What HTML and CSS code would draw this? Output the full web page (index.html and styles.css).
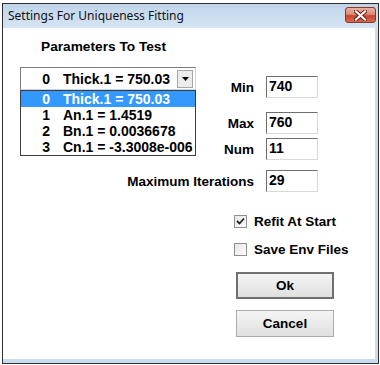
FILE: index.html
```html
<!DOCTYPE html>
<html lang="en">

<head>
    <meta charset="UTF-8">
    <title>Settings For Uniqueness Fitting</title>
    <link rel="stylesheet" href="styles.css">
</head>

<body>
    <div class="window">
        <div class="titlebar">
            <span class="title">Settings For Uniqueness Fitting</span>
            <div class="close">
                <svg width="13" height="11" viewBox="0 0 13 11">
                    <path d="M2 1.5 L11 9.5 M11 1.5 L2 9.5" stroke="#5a1a10" stroke-width="4" stroke-linecap="square" />
                    <path d="M2 1.5 L11 9.5 M11 1.5 L2 9.5" stroke="#fff" stroke-width="2.2" stroke-linecap="square" />
                </svg>
            </div>
        </div>
        <div class="client">
            <div class="upper">
                <div class="params">
                    <div class="params-title">Parameters To Test</div>
                    <div class="combo">
                        <span class="num">0</span>
                        <span class="name">Thick.1 = 750.03</span>
                        <span class="combo-btn">
                            <svg width="7" height="4" viewBox="0 0 7 4">
                                <path d="M0 0 H7 L3.5 4 Z" fill="#000" />
                            </svg>
                        </span>
                    </div>
                    <ul class="list">
                        <li class="selected"><span class="num">0</span><span class="name">Thick.1 = 750.03</span></li>
                        <li><span class="num">1</span><span class="name">An.1 = 1.4519</span></li>
                        <li><span class="num">2</span><span class="name">Bn.1 = 0.0036678</span></li>
                        <li><span class="num">3</span><span class="name">Cn.1 = -3.3008e-006</span></li>
                    </ul>
                </div>
                <div class="fields">
                    <div class="field field-min"><label>Min</label><div class="input">740</div></div>
                    <div class="field field-max"><label>Max</label><div class="input">760</div></div>
                    <div class="field field-num"><label>Num</label><div class="input">11</div></div>
                </div>
            </div>
            <div class="field field-iter"><label>Maximum Iterations</label><div class="input">29</div></div>
            <div class="actions">
                <div class="check check-first">
                    <span class="box">
                        <svg width="9" height="9" viewBox="0 0 9 9">
                            <path d="M1 4 L3.5 6.5 L8 1.5" stroke="#222" stroke-width="1.8" fill="none" />
                        </svg>
                    </span>
                    <span>Refit At Start</span>
                </div>
                <div class="check check-second">
                    <span class="box"></span>
                    <span>Save Env Files</span>
                </div>
                <div class="btn btn-default">Ok</div>
                <div class="btn btn-cancel">Cancel</div>
            </div>
        </div>
    </div>
</body>

</html>
```

FILE: styles.css
```css
* {
    margin: 0;
    padding: 0;
    box-sizing: border-box;
}

body {
    background: #fff;
    font-family: "Liberation Sans", Arial, sans-serif;
    font-size: 13.5px;
    font-weight: bold;
    color: #000;
}

.window {
    margin: 3px 0 0 2px;
    width: 377px;
    height: 361px;
    border: 1px solid #2e2e2e;
    background: #c9dcf0;
    display: flex;
    flex-direction: column;
}

.titlebar {
    height: 24px;
    display: flex;
    justify-content: space-between;
    align-items: flex-start;
    background: linear-gradient(#c0d4ea, #d6e5f4);
}

.titlebar .title {
    font-family: "Noto Sans", "Open Sans", sans-serif;
    font-weight: normal;
    font-size: 12px;
    line-height: 16px;
    padding: 4px 0 0 5px;
    color: #111;
}

.titlebar .close {
    width: 31px;
    height: 16px;
    margin: 3px 2px 0 0;
    border: 1px solid #86382a;
    border-radius: 3px;
    background: linear-gradient(#eab2a4 0%, #dc8b76 45%, #c9462c 55%, #d76a4f 100%);
    display: flex;
    align-items: center;
    justify-content: center;
}

.client {
    flex: 1;
    margin: 0 3px 4px 0;
    background: #fff;
    padding: 11px 57px 0 17px;
}

.upper {
    display: flex;
    justify-content: space-between;
}

.params {
    width: 176px;
}

.params-title {
    height: 16px;
    line-height: 16px;
    padding-left: 21px;
    font-size: 13.7px;
}

.combo {
    margin-top: 12px;
    height: 23px;
    border: 1px solid;
    border-color: #7c7c7c #d4d4d4 #d4d4d4 #7c7c7c;
    display: flex;
    align-items: center;
    line-height: 16px;
    font-size: 14px;
}

.num {
    width: 29px;
    text-align: right;
}

.name {
    margin-left: 13px;
    flex: 1;
    white-space: nowrap;
}

.combo-btn {
    width: 16px;
    height: 18px;
    margin-right: 2px;
    border: 1px solid #a6a6a6;
    background: #ececec;
    display: flex;
    align-items: center;
    justify-content: center;
}

.list {
    list-style: none;
    width: 176px;
    border: 1px solid #3c3c3c;
    font-size: 14px;
}

.list li {
    height: 16px;
    line-height: 16px;
    display: flex;
}

.list li.selected {
    background: #3399ff;
    color: #fff;
}

.fields {
    padding-top: 37px;
    display: flex;
    flex-direction: column;
    align-items: flex-end;
}

.field {
    display: flex;
    align-items: center;
    justify-content: flex-end;
    gap: 12px;
    white-space: nowrap;
}

.field-max {
    margin-top: 14px;
}

.field-num {
    margin-top: 4px;
}

.field-iter {
    margin-top: 10px;
}

.input {
    width: 52px;
    height: 22px;
    border: 1px solid;
    border-color: #6e6e6e #dadada #dadada #6e6e6e;
    padding: 1px 0 0 2px;
    line-height: 16px;
    font-size: 14px;
}

.actions {
    margin-right: -57px;
    padding-left: 214px;
    display: flex;
    flex-direction: column;
}

.check {
    height: 16px;
    display: flex;
    align-items: center;
    gap: 7px;
    white-space: nowrap;
}

.check-first {
    margin-top: 21px;
}

.check-second {
    margin-top: 12px;
}

.check .box {
    width: 13px;
    height: 13px;
    border: 1px solid #8e8f8f;
    background: linear-gradient(135deg, #e6e6e6, #fdfdfd);
    display: flex;
    align-items: center;
    justify-content: center;
}

.btn {
    width: 98px;
    height: 27px;
    margin-left: 2px;
    display: flex;
    align-items: center;
    justify-content: center;
    background: linear-gradient(#f4f4f4, #e0e0e0);
    border: 1px solid #acacac;
}

.btn-default {
    margin-top: 15px;
    border: 2px solid #707070;
}

.btn-cancel {
    margin-top: 11px;
}
```
